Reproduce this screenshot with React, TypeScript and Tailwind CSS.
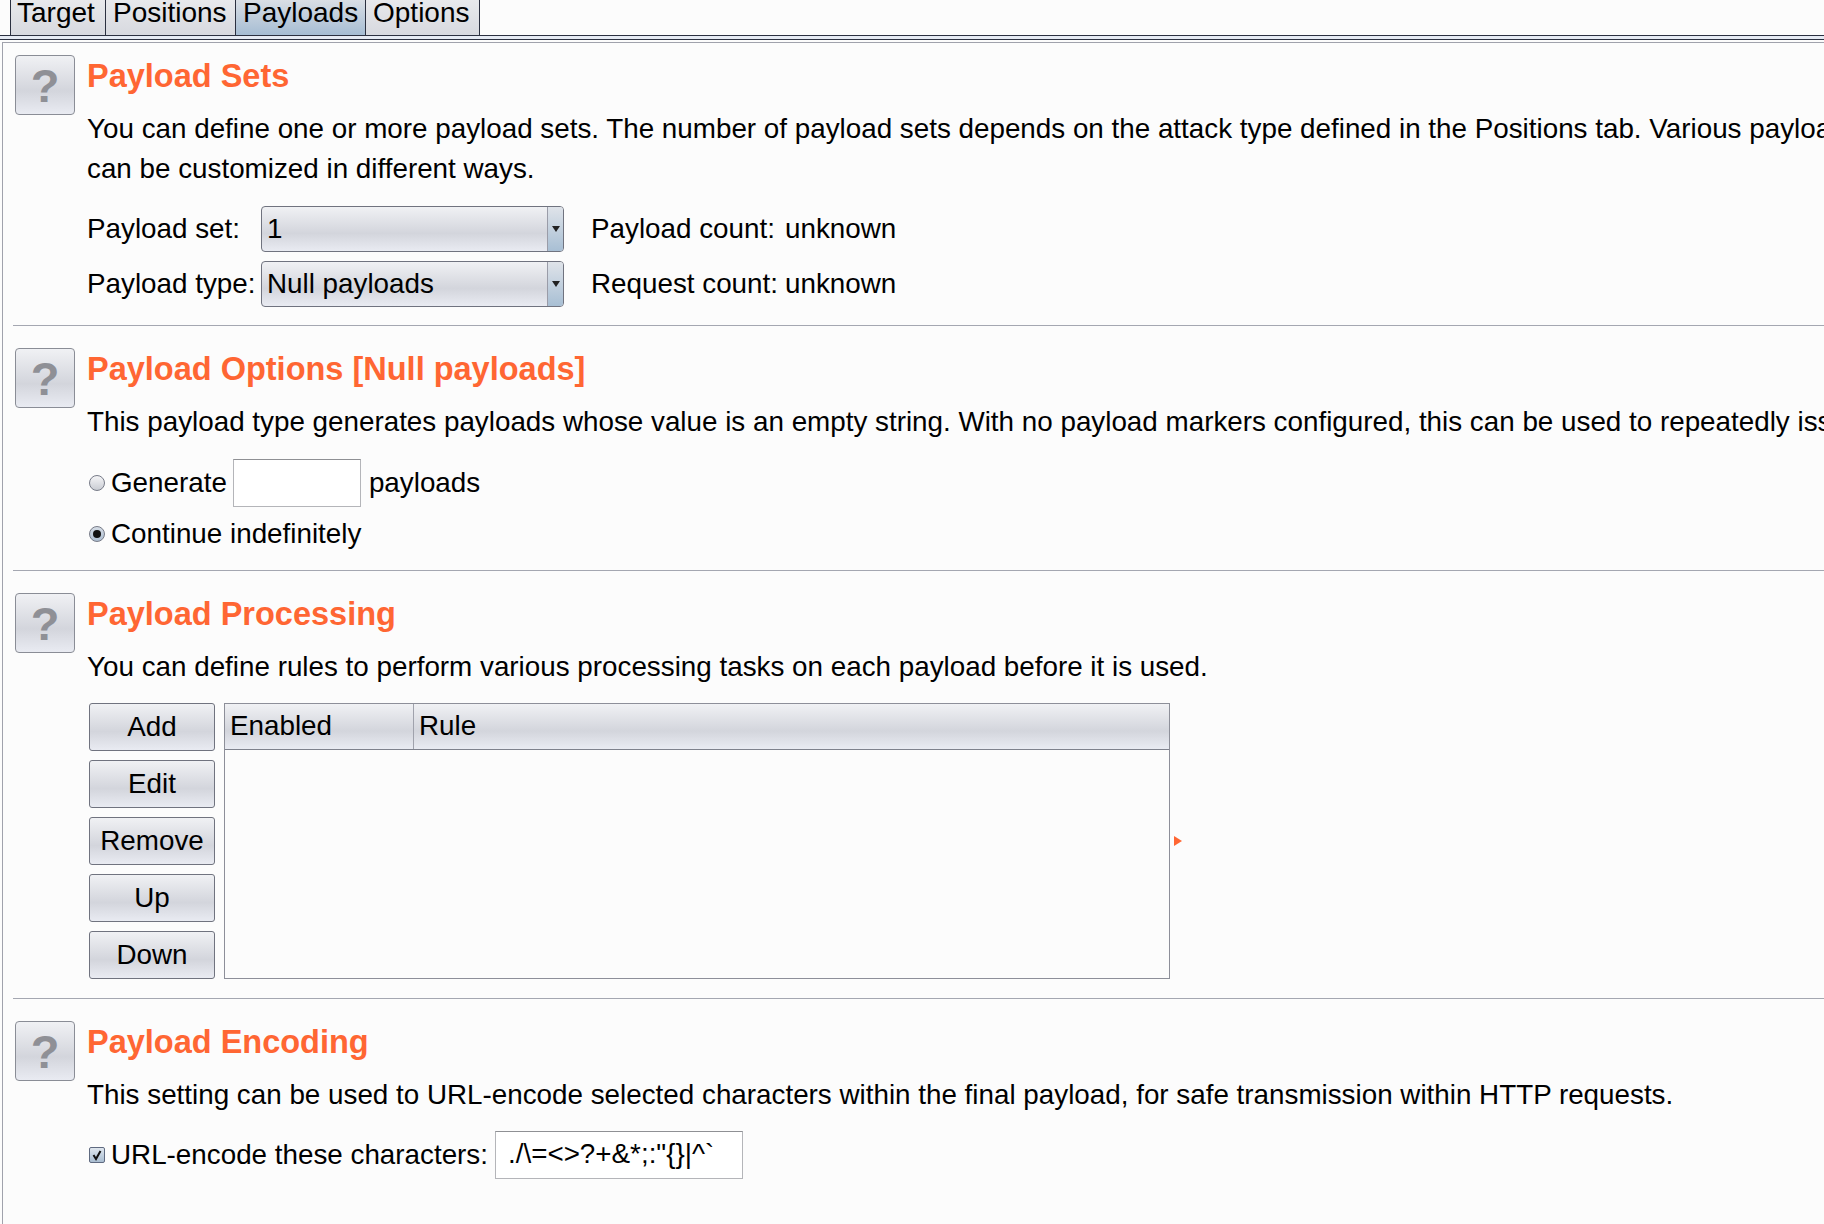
const FONT = "font-['Liberation_Sans',Arial,sans-serif]";
const RAISED = 'bg-[linear-gradient(#f0f1f4,#d3d5dc_60%,#e9ebf2)]';

const Tab = ({ label, active, width }: { label: string; active?: boolean; width: string }) => (
  <div
    className={`${width} h-[35px] shrink-0 border-r border-[#2b3040] text-[28px] leading-[25px] overflow-hidden ${
      active ? 'bg-[linear-gradient(#d9dee5,#a6bdd3)]' : 'bg-[linear-gradient(#e8e9ec,#d7d9df)]'
    }`}
  >
    {label}
  </div>
);

const HelpButton = () => (
  <div
    className={`w-[60px] h-[60px] shrink-0 rounded-[4px] border border-[#8a8d96] ${RAISED} flex items-center justify-center text-[47px] font-bold text-[#8f9096] leading-none`}
  >
    ?
  </div>
);

const Section = ({
  title,
  height,
  top,
  children,
}: {
  title: string;
  height: string;
  top: string;
  children: React.ReactNode;
}) => (
  <div className={`${height} ${top} flex gap-[12px] pl-[12px]`}>
    <HelpButton />
    <div className="flex flex-col min-w-0">
      <h2 className="h-[54px] pt-[5px] text-[32.5px] leading-[32px] font-bold text-[#ff6633] whitespace-nowrap">{title}</h2>
      {children}
    </div>
  </div>
);

const Divider = () => <div className="h-px ml-[10px] bg-[#a4a7b1]" />;

const Dropdown = ({ value }: { value: string }) => (
  <div className={`w-[303px] h-[46px] flex rounded-[4px] border border-[#70737f] ${RAISED} overflow-hidden`}>
    <div className="flex-1 pl-[5px] leading-[44px]">{value}</div>
    <div className="w-[16px] border-l border-[#9a9ca8] bg-[linear-gradient(#dfe3e9,#a8bfd4)] flex items-center justify-center">
      <svg width="8" height="6" viewBox="0 0 8 6">
        <path d="M0 0h8L4 6z" fill="#222" />
      </svg>
    </div>
  </div>
);

const Radio = ({ checked }: { checked?: boolean }) => (
  <div
    className={`ml-[2px] w-[16px] h-[16px] rounded-full border border-[#777b88] flex items-center justify-center ${
      checked ? 'bg-[linear-gradient(#d5dce5,#aebfd2)]' : 'bg-[linear-gradient(#f5f5f7,#c9ccd3)]'
    }`}
  >
    {checked && <div className="w-[8px] h-[8px] rounded-full bg-[#111]" />}
  </div>
);

const TextField = ({ width, value }: { width: string; value?: string }) => (
  <div className={`${width} h-[48px] border border-[#b4b5b9] border-t-[#8f9094] bg-white pl-[12px] leading-[44px] whitespace-nowrap`}>
    {value}
  </div>
);

const SideButton = ({ label }: { label: string }) => (
  <div className={`w-[126px] h-[48px] rounded-[3px] border border-[#70737f] ${RAISED} flex items-center justify-center`}>
    {label}
  </div>
);

export default function App() {
  return (
    <div className={`${FONT} w-[1824px] h-[1224px] overflow-hidden bg-[#fcfcfc] text-[27.8px] text-black`}>
      <div className="flex pl-[10px] h-[35px]">
        <div className="flex border-l border-[#2b3040]">
          <Tab label="Target" width="w-[95px] pl-[6px]" />
          <Tab label="Positions" width="w-[130px] pl-[7px]" />
          <Tab label="Payloads" active width="w-[130px] pl-[7px]" />
          <Tab label="Options" width="w-[114px] pl-[7px]" />
        </div>
      </div>
      <div className="h-[5px] border-y border-[#2b3040] bg-[#e6ebf4]" />
      <div className="mt-[2px] ml-[2px] h-[1182px] border-l border-t border-[#a0a2ac]">
        <Section title="Payload Sets" height="h-[282px]" top="pt-[12px]">
          <p className="whitespace-nowrap leading-[40px]">
            You can define one or more payload sets. The number of payload sets depends on the attack type defined in the Positions tab. Various payload types are available for each payload set, and each payload type
          </p>
          <p className="whitespace-nowrap leading-[40px]">can be customized in different ways.</p>
          <div className="mt-[17px] flex flex-col gap-[9px]">
            <div className="flex items-center">
              <span className="w-[174px]">Payload set:</span>
              <Dropdown value="1" />
              <span className="ml-[27px] w-[194px]">Payload count:</span>
              <span>unknown</span>
            </div>
            <div className="flex items-center">
              <span className="w-[174px]">Payload type:</span>
              <Dropdown value="Null payloads" />
              <span className="ml-[27px] w-[194px]">Request count:</span>
              <span>unknown</span>
            </div>
          </div>
        </Section>
        <Divider />
        <Section title="Payload Options [Null payloads]" height="h-[244px]" top="pt-[22px]">
          <p className="whitespace-nowrap leading-[40px]">
            This payload type generates payloads whose value is an empty string. With no payload markers configured, this can be used to repeatedly issue the base request indefinitely.
          </p>
          <div className="mt-[17px] flex items-center">
            <Radio />
            <span className="ml-[6px]">Generate</span>
            <div className="ml-[6px]">
              <TextField width="w-[128px]" />
            </div>
            <span className="ml-[8px]">payloads</span>
          </div>
          <div className="mt-[7px] flex items-center h-[40px]">
            <Radio checked />
            <span className="ml-[6px]">Continue indefinitely</span>
          </div>
        </Section>
        <Divider />
        <Section title="Payload Processing" height="h-[427px]" top="pt-[22px]">
          <p className="whitespace-nowrap leading-[40px]">
            You can define rules to perform various processing tasks on each payload before it is used.
          </p>
          <div className="mt-[16px] flex items-stretch gap-[9px] ml-[2px]">
            <div className="flex flex-col gap-[9px]">
              <SideButton label="Add" />
              <SideButton label="Edit" />
              <SideButton label="Remove" />
              <SideButton label="Up" />
              <SideButton label="Down" />
            </div>
            <div className="w-[946px] h-[276px] border border-[#8d8f99] flex flex-col">
              <div className={`h-[46px] flex border-b border-[#7e818c] ${RAISED}`}>
                <div className="w-[189px] border-r border-[#a0a2ac] pl-[5px] leading-[44px]">Enabled</div>
                <div className="flex-1 pl-[5px] leading-[44px]">Rule</div>
              </div>
            </div>
            <div className="self-center ml-[-5px]">
              <svg width="8" height="10" viewBox="0 0 8 10" className="block">
                <path d="M0 0l8 5-8 5z" fill="#ff6633" />
              </svg>
            </div>
          </div>
        </Section>
        <Divider />
        <Section title="Payload Encoding" height="h-[200px]" top="pt-[22px]">
          <p className="whitespace-nowrap leading-[40px]">
            This setting can be used to URL-encode selected characters within the final payload, for safe transmission within HTTP requests.
          </p>
          <div className="mt-[16px] flex items-center ml-[2px]">
            <div className="w-[16px] h-[16px] rounded-[2px] border border-[#5f6a80] bg-[linear-gradient(#dfe6ee,#a9bdd1)] flex items-center justify-center">
              <svg width="12" height="12" viewBox="0 0 12 12">
                <path d="M2.5 6l2.5 4 4.5-8" fill="none" stroke="#111" strokeWidth="2" />
              </svg>
            </div>
            <span className="ml-[6px]">URL-encode these characters:</span>
            <div className="ml-[7px]">
              <TextField width="w-[248px]" value={'./\\=<>?+&*;:"{}|^`'} />
            </div>
          </div>
        </Section>
      </div>
    </div>
  );
}
